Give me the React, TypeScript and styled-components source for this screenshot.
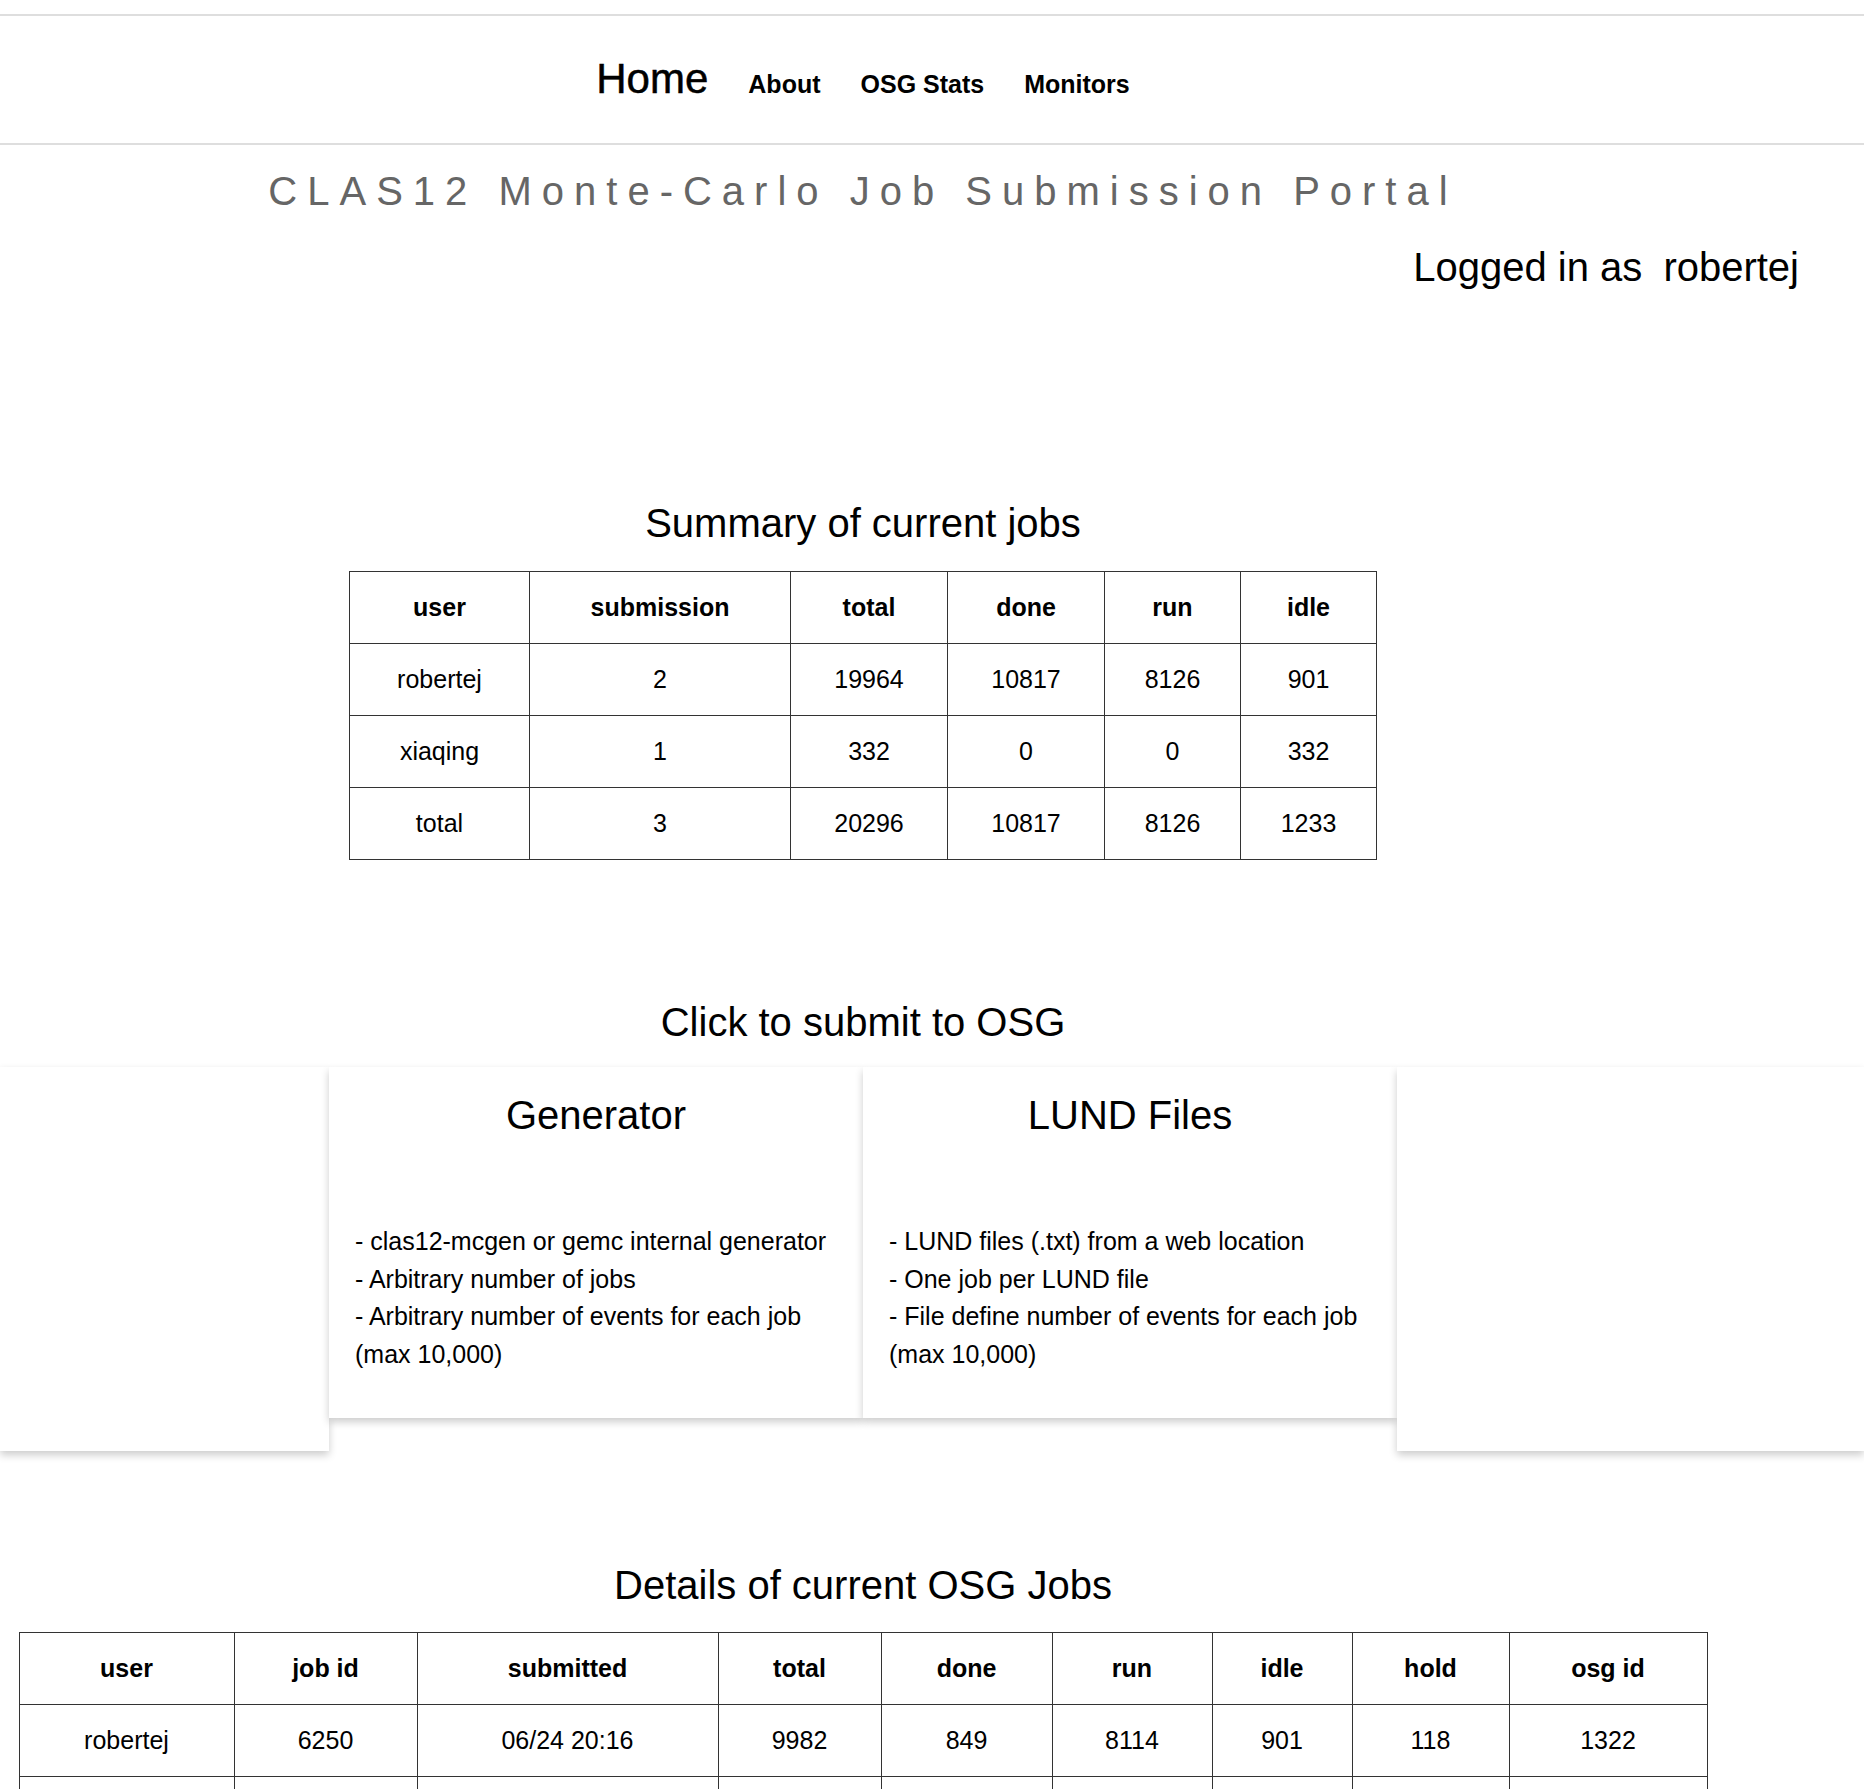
import styled, { createGlobalStyle } from "styled-components";

const GlobalStyle = createGlobalStyle`
  html, body {
    margin: 0;
    padding: 0;
    background: #fff;
  }
  body {
    font-family: "Liberation Sans", Arial, sans-serif;
    color: #000;
  }
`;

const Page = styled.div`
  width: 1864px;
  padding-top: 14px;
`;

const NavBar = styled.nav`
  height: 127px;
  border-top: 2px solid #dedede;
  border-bottom: 2px solid #dedede;
`;

const NavList = styled.ul`
  width: 1726px;
  margin: 0;
  padding: 39px 0 0;
  list-style: none;
  display: flex;
  justify-content: center;
  align-items: baseline;
  gap: 40px;
`;

const NavLink = styled.a<{ $active?: boolean }>`
  font-size: ${(p) => (p.$active ? "42px" : "25px")};
  font-weight: ${(p) => (p.$active ? 400 : 700)};
  -webkit-text-stroke: ${(p) => (p.$active ? "0.5px #000" : "0")};
  line-height: 48px;
  color: #000;
  text-decoration: none;
`;

const PortalTitle = styled.h1`
  width: 1726px;
  margin: 22px 0 0;
  font-size: 40px;
  font-weight: 400;
  line-height: 48px;
  letter-spacing: 10px;
  color: #666;
  text-align: center;
`;

const LoginRow = styled.div`
  margin-top: 28px;
  padding-right: 65px;
  text-align: right;
  font-size: 40px;
  line-height: 48px;
`;

const UserName = styled.span`
  margin-left: 10px;
`;

const Section = styled.section<{ $top: number }>`
  width: 1726px;
  margin-top: ${(p) => p.$top}px;
  display: flex;
  flex-direction: column;
  align-items: center;
`;

const SectionHeading = styled.h2`
  margin: 0;
  font-size: 40px;
  font-weight: 400;
  line-height: 48px;
  text-align: center;
`;

const Table = styled.table<{ $width: number }>`
  width: ${(p) => p.$width}px;
  margin-top: ${(p) => (p.$width > 1200 ? 23 : 24)}px;
  table-layout: fixed;
  border-collapse: collapse;
  font-size: 25px;
`;

const Col = styled.col<{ $w: number }>`
  width: ${(p) => p.$w}px;
`;

const HeadCell = styled.th`
  height: 71px;
  padding: 0;
  border: 1px solid #333;
  font-weight: 700;
  text-align: center;
  vertical-align: middle;
`;

const Cell = styled.td`
  height: 71px;
  padding: 0;
  border: 1px solid #333;
  text-align: center;
  vertical-align: middle;
`;

const CardRow = styled.div`
  margin-top: 21px;
  display: flex;
  align-items: flex-start;
`;

const SidePanel = styled.div<{ $grow?: boolean }>`
  flex: ${(p) => (p.$grow ? "1 1 auto" : "0 0 329px")};
  height: 384px;
  background: #fff;
  box-shadow: 0 4px 8px 0 rgba(0, 0, 0, 0.2);
`;

const Card = styled.a`
  flex: 0 0 534px;
  box-sizing: border-box;
  padding: 24px 26px 45px;
  background: #fff;
  box-shadow: 0 4px 8px 0 rgba(0, 0, 0, 0.2);
  color: #000;
  text-decoration: none;
  cursor: pointer;
`;

const CardTitle = styled.h3`
  margin: 0 0 84px;
  font-size: 40px;
  font-weight: 400;
  line-height: 48px;
  text-align: center;
`;

const CardText = styled.p`
  margin: 0;
  font-size: 25px;
  line-height: 37.5px;
`;

const summaryCols = [180, 261, 157, 157, 136, 136];
const summaryHead = ["user", "submission", "total", "done", "run", "idle"];
const summaryRows = [
  ["robertej", "2", "19964", "10817", "8126", "901"],
  ["xiaqing", "1", "332", "0", "0", "332"],
  ["total", "3", "20296", "10817", "8126", "1233"],
];

const detailCols = [215, 183, 301, 163, 171, 160, 140, 157, 198];
const detailHead = ["user", "job id", "submitted", "total", "done", "run", "idle", "hold", "osg id"];
const detailRows = [
  ["robertej", "6250", "06/24 20:16", "9982", "849", "8114", "901", "118", "1322"],
  ["", "", "", "", "", "", "", "", ""],
];

const cards = [
  {
    title: "Generator",
    lines: [
      "- clas12-mcgen or gemc internal generator",
      "- Arbitrary number of jobs",
      "- Arbitrary number of events for each job (max 10,000)",
    ],
  },
  {
    title: "LUND Files",
    lines: [
      "- LUND files (.txt) from a web location",
      "- One job per LUND file",
      "- File define number of events for each job (max 10,000)",
    ],
  },
];

function DataTable({ cols, head, rows }: { cols: number[]; head: string[]; rows: string[][] }) {
  const width = cols.reduce((a, b) => a + b, 0);
  return (
    <Table $width={width}>
      <colgroup>
        {cols.map((w, i) => (
          <Col key={i} $w={w} />
        ))}
      </colgroup>
      <thead>
        <tr>
          {head.map((h) => (
            <HeadCell key={h}>{h}</HeadCell>
          ))}
        </tr>
      </thead>
      <tbody>
        {rows.map((row, r) => (
          <tr key={r}>
            {row.map((v, c) => (
              <Cell key={c}>{v}</Cell>
            ))}
          </tr>
        ))}
      </tbody>
    </Table>
  );
}

export default function App() {
  return (
    <Page>
      <GlobalStyle />

      <NavBar>
        <NavList>
          <li>
            <NavLink $active href="#">Home</NavLink>
          </li>
          <li>
            <NavLink href="#">About</NavLink>
          </li>
          <li>
            <NavLink href="#">OSG Stats</NavLink>
          </li>
          <li>
            <NavLink href="#">Monitors</NavLink>
          </li>
        </NavList>
      </NavBar>

      <PortalTitle>CLAS12 Monte-Carlo Job Submission Portal</PortalTitle>

      <LoginRow>
        Logged in as <UserName>robertej</UserName>
      </LoginRow>

      <Section $top={208}>
        <SectionHeading>Summary of current jobs</SectionHeading>
        <DataTable cols={summaryCols} head={summaryHead} rows={summaryRows} />
      </Section>

      <Section $top={138}>
        <SectionHeading>Click to submit to OSG</SectionHeading>
      </Section>

      <CardRow>
        <SidePanel />
        {cards.map((card) => (
          <Card key={card.title} href="#">
            <CardTitle>{card.title}</CardTitle>
            <CardText>
              {card.lines.map((line, i) => (
                <span key={i}>
                  {line}
                  {i < card.lines.length - 1 && <br />}
                </span>
              ))}
            </CardText>
          </Card>
        ))}
        <SidePanel $grow />
      </CardRow>

      <Section $top={110}>
        <SectionHeading>Details of current OSG Jobs</SectionHeading>
        <DataTable cols={detailCols} head={detailHead} rows={detailRows} />
      </Section>
    </Page>
  );
}
